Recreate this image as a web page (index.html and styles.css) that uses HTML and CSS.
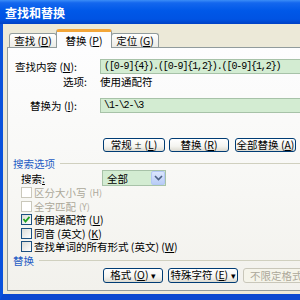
FILE: index.html
```html
<!DOCTYPE html>
<html lang="zh-CN">
<head>
  <meta charset="UTF-8">
  <title>查找和替换</title>
  <link rel="stylesheet" href="styles.css">
</head>
<body>

  <div class="window">
    <!-- Title Bar -->
    <div class="titlebar">查找和替换</div>

    <div class="frame">
      <!-- Tabs -->
      <ul class="tabs">
        <li class="tab">查找 (<u>D</u>)</li>
        <li class="tab active">替换 (<u>P</u>)</li>
        <li class="tab">定位 (<u>G</u>)</li>
      </ul>

      <!-- Tab Panel -->
      <div class="panel">
        <div class="field first">
          <span class="label">查找内容 (<u>N</u>):</span>
          <div class="input mono">([0-9]{4}).([0-9]{1,2}).([0-9]{1,2})</div>
        </div>
        <div class="field options">
          <span class="label">选项:</span>
          <span class="value">使用通配符</span>
        </div>
        <div class="field replace">
          <span class="label">替换为 (<u>I</u>):</span>
          <div class="input mono">\1-\2-\3</div>
        </div>

        <div class="buttons top">
          <button class="btn w62">常规 <span class="sym">±</span> (<u>L</u>)</button>
          <button class="btn w60">替换 (<u>R</u>)</button>
          <button class="btn w61">全部替换 (<u>A</u>)</button>
        </div>

        <div class="group search-group">搜索选项</div>

        <div class="search-row">
          <span class="search-label">搜索<u>:</u></span>
          <div class="select">
            <span>全部</span>
            <span class="arrow">
              <svg width="9" height="6" viewBox="0 0 9 6"><polyline points="1,1 4.5,4.5 8,1" fill="none" stroke="#4d6185" stroke-width="1.6"/></svg>
            </span>
          </div>
        </div>

        <ul class="checks">
          <li class="disabled"><span class="box"></span>区分大小写 <small>(H)</small></li>
          <li class="disabled"><span class="box"></span>全字匹配 <small>(Y)</small></li>
          <li><span class="box"><svg width="9" height="9" viewBox="0 0 9 9"><polyline points="1.5,4 3.5,6.5 7.5,1.8" fill="none" stroke="#21a121" stroke-width="1.8"/></svg></span>使用通配符 (<u>U</u>)</li>
          <li><span class="box"></span>同音 (英文) (<u>K</u>)</li>
          <li><span class="box"></span>查找单词的所有形式 (英文) (<u>W</u>)</li>
        </ul>

        <div class="group replace-group">替换</div>

        <div class="buttons bottom">
          <button class="btn w60">格式 (<u>O</u>) <span class="caret">▾</span></button>
          <button class="btn w70">特殊字符 (<u>E</u>) <span class="caret">▾</span></button>
          <button class="btn w80 off">不限定格式</button>
        </div>
      </div>
    </div>
  </div>

</body>
</html>
```

FILE: styles.css
```css
/* General Page Styling */
body {
  margin: 0;
  width: 300px;
  height: 300px;
  overflow: hidden;
  background-color: #ece9d8;
  font-family: "Noto Sans CJK SC", "Liberation Sans", sans-serif;
  font-size: 10.5px;
  color: #000;
}

ul {
  list-style-type: none;
  margin: 0;
  padding: 0;
}

u {
  text-decoration: underline;
  text-underline-offset: 1px;
}

.window {
  width: 380px;
}

/* Title Bar */
.titlebar {
  height: 24px;
  line-height: 25px;
  padding-left: 5px;
  color: white;
  font-size: 12px;
  font-weight: bold;
  background: linear-gradient(to bottom, #3b8df7 0%, #1467ee 12%, #0058e8 45%, #0053e3 80%, #0040c4 100%);
}

.frame {
  height: 270px;
  border-left: 3px solid #0a52dc;
  border-bottom: 6px solid #0a48d0;
  background-color: #ece9d8;
  padding-left: 4px;
}

/* Tabs */
.tabs {
  display: flex;
  align-items: flex-end;
  height: 23px;
  padding-left: 2px;
}

.tab {
  width: 46px;
  height: 13px;
  line-height: 13px;
  text-align: center;
  white-space: nowrap;
  border: 1px solid #919b9c;
  border-bottom: none;
  border-radius: 3px 3px 0 0;
  background: linear-gradient(to bottom, #ffffff, #ecebe6);
}

.tab.active {
  position: relative;
  z-index: 1;
  width: 54px;
  height: 16px;
  line-height: 17px;
  margin: 0 -1px -1px -1px;
  border-top: 3px solid #f3a63a;
  background: #fcfcfe;
}

/* Tab Panel */
.panel {
  width: 360px;
  height: 242px;
  border: 1px solid #919b9c;
  background: linear-gradient(to bottom, #fdfdfe 0%, #f7f7f4 60%, #f2f1ec 100%);
}

.field {
  display: flex;
  align-items: center;
  height: 15px;
}

.field .label {
  width: 69px;
  text-align: right;
  padding-right: 23px;
  white-space: nowrap;
}

.field.first {
  margin-top: 11px;
}

.field.options {
  height: 14px;
}

.field.options .label {
  width: 79px;
  padding-right: 13px;
}

.field.replace {
  margin-top: 10px;
}

.input {
  width: 220px;
  height: 13px;
  line-height: 13px;
  padding-left: 3px;
  border: 1px solid #a7c2a8;
  background-color: #d3ecd2;
}

.mono {
  font-family: "Liberation Mono", monospace;
  font-size: 10px;
  letter-spacing: -1.1px;
}

/* Buttons */
.buttons {
  display: flex;
  padding-left: 95px;
}

.buttons.top {
  margin-top: 25px;
  height: 14px;
}

.buttons.top .btn {
  height: 14px;
}

.buttons.top .w62 {
  margin-right: 4px;
}

.buttons.top .w60 {
  margin-right: 6px;
}

.buttons.bottom {
  margin-top: 0.5px;
  height: 15px;
  gap: 5px;
}

.btn {
  height: 15px;
  padding: 0;
  font-family: inherit;
  font-size: 10.5px;
  line-height: 12px;
  color: #000;
  border: 1px solid #003c74;
  border-radius: 3px;
  background: linear-gradient(to bottom, #ffffff 0%, #f4f4f0 60%, #dcdad0 100%);
  white-space: nowrap;
}

.btn .sym {
  font-size: 8px;
}

.btn .caret {
  font-size: 9px;
}

.btn.off {
  color: #aca899;
  border-color: #c9c7ba;
  background: #f5f4ea;
  text-align: left;
  padding-left: 6px;
}

.w60 { width: 60px; }
.w61 { width: 61px; }
.w62 { width: 62px; }
.w70 { width: 70px; }
.w80 { width: 80px; }

/* Group headings */
.group {
  display: flex;
  align-items: center;
  gap: 5px;
  padding-left: 5px;
  color: #1f5cc4;
}

.group::after {
  content: "";
  flex: 1;
  height: 1px;
  background-color: #d0d0bf;
}

.search-group {
  margin-top: 5px;
  height: 12px;
}

.replace-group {
  height: 14px;
}

/* Search row */
.search-row {
  display: flex;
  align-items: center;
  margin-top: 1px;
  height: 16px;
}

.search-label {
  width: 81px;
  padding-left: 13px;
}

.select {
  display: flex;
  align-items: center;
  justify-content: space-between;
  width: 58px;
  height: 14px;
  padding-left: 4px;
  border: 1px solid #a7c2a8;
  background-color: #d3ecd2;
}

.select .arrow {
  display: flex;
  align-items: center;
  justify-content: center;
  width: 14px;
  height: 14px;
  border: 1px solid #b4c8f6;
  border-radius: 2px;
  box-sizing: border-box;
  background: linear-gradient(to bottom, #dbe6fd, #b9cdf7);
}

/* Checkboxes */
.checks li {
  display: flex;
  align-items: center;
  height: 13.5px;
  line-height: 13px;
  padding-left: 13px;
  white-space: nowrap;
}

.checks .box {
  display: flex;
  align-items: center;
  justify-content: center;
  width: 11px;
  height: 11px;
  margin-right: 2px;
  box-sizing: border-box;
  border: 1px solid #1c5180;
  background: linear-gradient(to bottom right, #dcdcd7, #ffffff);
}

.checks .disabled {
  color: #aca899;
}

.checks .disabled .box {
  border-color: #cac8bb;
  background: #ffffff;
}

.checks small {
  font-size: 9px;
  margin-left: 3px;
}
```
